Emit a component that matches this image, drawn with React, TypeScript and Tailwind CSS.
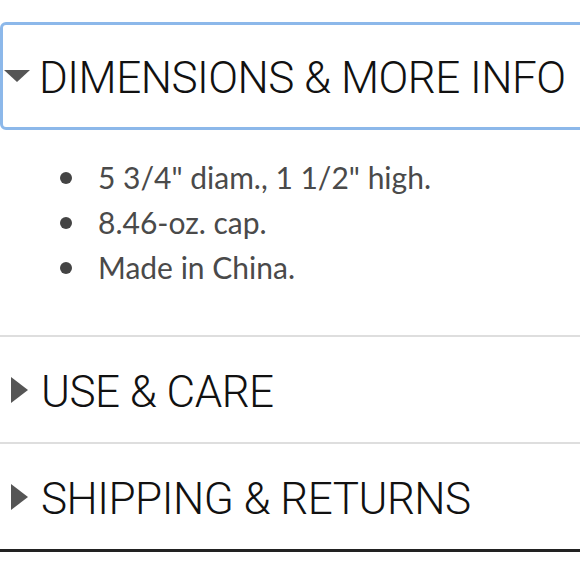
import { ReactNode } from 'react'

const heading = 'text-[44px] font-light leading-none text-[#111] tracking-[-0.5px] pt-[4px]'

function Caret({ open }: { open?: boolean }) {
  return open ? (
    <svg width="28" height="14" viewBox="0 0 28 14" className="shrink-0">
      <polygon points="1,1 27,1 14,13" fill="#555" />
    </svg>
  ) : (
    <svg width="19" height="28" viewBox="0 0 19 28" className="shrink-0">
      <polygon points="1,1 18,14 1,27" fill="#555" />
    </svg>
  )
}

function Section({ title, last, children }: { title: string; last?: boolean; children?: ReactNode }) {
  return (
    <div className={last ? 'border-b-[3px] border-[#222]' : 'border-b-2 border-[#dedede]'}>
      <div className="flex h-[105px] items-center gap-[12px] pl-[10px]">
        <Caret />
        <span className={heading}>{title}</span>
      </div>
      {children}
    </div>
  )
}

export default function App() {
  const items = ['5 3/4" diam., 1 1/2" high.', '8.46-oz. cap.', 'Made in China.']

  return (
    <div
      className="h-[580px] w-[580px] overflow-hidden bg-white pt-[22px]"
      style={{ fontFamily: 'Roboto, "Noto Sans", sans-serif' }}
    >
      <div className="border-b-2 border-[#dedede]">
        <button className="flex h-[108px] w-[620px] items-center gap-[8px] rounded-[6px] border-[3px] border-[#8cb8ea] pl-0 text-left">
          <Caret open />
          <span className={heading}>DIMENSIONS &amp; MORE INFO</span>
        </button>
        <ul
          className="pt-[25px] pb-[45px] pl-[60px] text-[30px] text-[#4a4a4a]"
          style={{ fontFamily: 'Lato, "Noto Sans", sans-serif' }}
        >
          {items.map((t) => (
            <li key={t} className="flex h-[45px] items-center gap-[26px]">
              <span className="h-[12px] w-[12px] shrink-0 rounded-full bg-[#444]" />
              {t}
            </li>
          ))}
        </ul>
      </div>
      <Section title="USE & CARE" />
      <Section title="SHIPPING & RETURNS" last />
    </div>
  )
}
